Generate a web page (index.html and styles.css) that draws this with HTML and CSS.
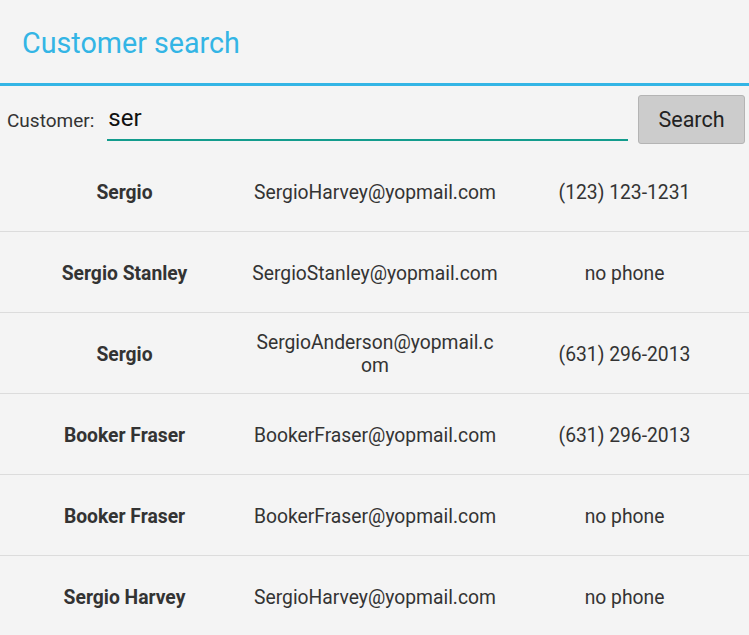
FILE: index.html
```html
<!DOCTYPE html>
<html lang="en">
<head>
    <meta charset="UTF-8">
    <meta name="viewport" content="width=device-width, initial-scale=1.0">
    <title>Customer search</title>
    <link rel="stylesheet" href="styles.css">
</head>
<body>
<div class="app">
    <h1 class="title">Customer search</h1>

    <form class="search-bar" id="searchForm">
        <label for="customer">Customer:</label>
        <input type="text" id="customer" name="customer" value="ser">
        <button type="submit">Search</button>
    </form>

    <div class="results">
        <div class="row">
            <div class="name">Sergio</div>
            <div class="email">SergioHarvey@yopmail.com</div>
            <div class="phone">(123) 123-1231</div>
        </div>
        <div class="row">
            <div class="name">Sergio Stanley</div>
            <div class="email">SergioStanley@yopmail.com</div>
            <div class="phone">no phone</div>
        </div>
        <div class="row">
            <div class="name">Sergio</div>
            <div class="email">SergioAnderson@yopmail.com</div>
            <div class="phone">(631) 296-2013</div>
        </div>
        <div class="row">
            <div class="name">Booker Fraser</div>
            <div class="email">BookerFraser@yopmail.com</div>
            <div class="phone">(631) 296-2013</div>
        </div>
        <div class="row">
            <div class="name">Booker Fraser</div>
            <div class="email">BookerFraser@yopmail.com</div>
            <div class="phone">no phone</div>
        </div>
        <div class="row">
            <div class="name">Sergio Harvey</div>
            <div class="email">SergioHarvey@yopmail.com</div>
            <div class="phone">no phone</div>
        </div>
    </div>
</div>
</body>
</html>
```

FILE: styles.css
```css
* {
    box-sizing: border-box;
}
body {
    font-family: Roboto, "Liberation Sans", sans-serif;
    background: #f4f4f4;
    margin: 0;
    padding: 0;
    color: #333;
    overflow: hidden;
}
.app {
    width: 749px;
    height: 635px;
    overflow: hidden;
}
.title {
    margin: 0;
    height: 86px;
    padding: 26px 0 0 22px;
    font-size: 28.7px;
    font-weight: normal;
    color: #33b5e5;
    border-bottom: 3px solid #33b5e5;
}
.search-bar {
    display: flex;
    align-items: center;
    height: 65px;
    padding: 0 4px 0 7px;
}
.search-bar label {
    font-size: 19px;
    color: #333;
    margin-right: 13px;
    margin-top: 3px;
}
.search-bar input {
    flex: 1;
    height: 40px;
    margin-top: 4px;
    border: none;
    border-bottom: 2px solid #139c8d;
    background: transparent;
    font-family: inherit;
    font-size: 24px;
    color: #111;
    padding: 0 1px 4px;
    outline: none;
}
.search-bar button {
    width: 107px;
    height: 49px;
    margin-left: 10px;
    margin-top: 1px;
    background: #cccccc;
    border: 1px solid #b4b4b4;
    border-radius: 3px;
    font-family: inherit;
    font-size: 21.5px;
    color: #222;
    cursor: pointer;
}
.row {
    display: grid;
    grid-template-columns: 249px 251px 249px;
    align-items: center;
    height: 81px;
    padding-top: 2px;
    border-bottom: 1px solid #dcdcdc;
    font-size: 19.3px;
    text-align: center;
}
.row:last-child {
    border-bottom: none;
}
.name {
    font-weight: bold;
    color: #333;
}
.email {
    padding: 0 2px 0 3px;
    word-break: break-all;
    line-height: 23px;
    color: #333;
}
.phone {
    color: #333;
}
```
